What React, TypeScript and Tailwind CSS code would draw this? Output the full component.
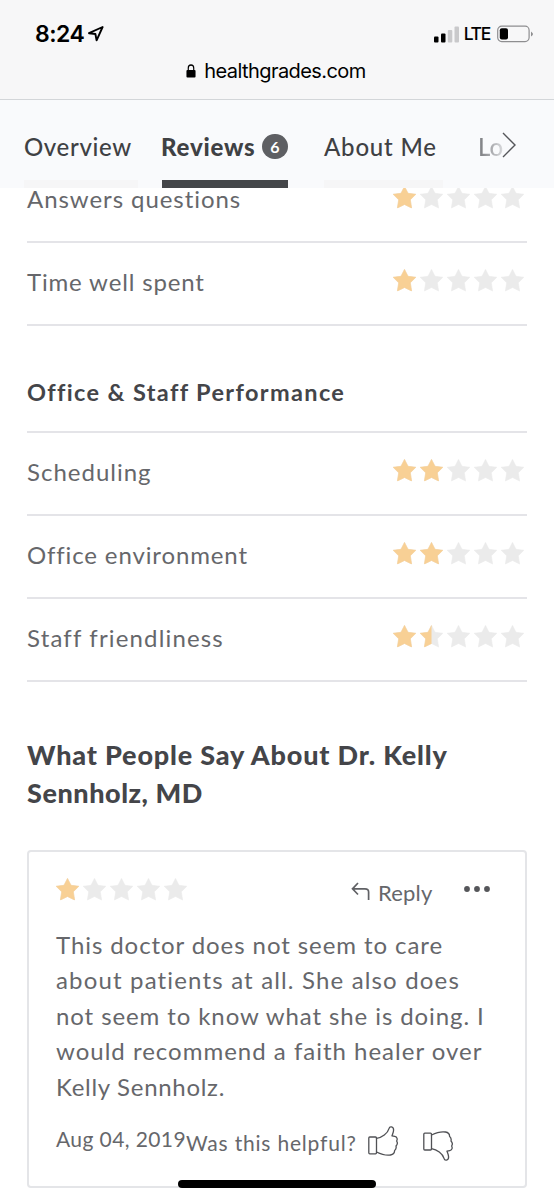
import clsx from "clsx";

const STAR = "M11.5 0.4 L15 7.3 L22.8 8.3 L17.3 13.8 L18.6 22 L11.5 18.5 L4.4 22 L5.7 13.8 L0.2 8.3 L8 7.3 Z";

function Star({ fill }: { fill: number }) {
  return (
    <svg width="23" height="23" viewBox="0 0 23 23" className="shrink-0">
      <path d={STAR} fill="#ebebeb" stroke="#ebebeb" strokeWidth="0.6" strokeLinejoin="round" />
      {fill > 0 && (
        <path
          d={STAR}
          fill="#f8d095"
          stroke="#f8d095"
          strokeWidth="0.6"
          strokeLinejoin="round"
          style={{ clipPath: `inset(0 ${(1 - fill) * 100}% 0 0)` }}
        />
      )}
    </svg>
  );
}

function Stars({ value }: { value: number }) {
  return (
    <div className="flex gap-1">
      {[0, 1, 2, 3, 4].map((i) => (
        <Star key={i} fill={Math.max(0, Math.min(1, value - i))} />
      ))}
    </div>
  );
}

function Row({ label, value, className }: { label: string; value: number; className?: string }) {
  return (
    <div className="flex h-[83px] items-center justify-between border-b-2 border-[#e4e4e8] pr-[3.5px]">
      <span className={clsx("pb-[3px] whitespace-nowrap", className)}>{label}</span>
      <div className="-mt-[6px]">
        <Stars value={value} />
      </div>
    </div>
  );
}

function Thumb({ down }: { down?: boolean }) {
  return (
    <svg
      width="30"
      height="30"
      viewBox="0 0 30 30"
      fill="none"
      stroke="#505155"
      strokeWidth="1.3"
      strokeLinejoin="round"
      strokeLinecap="round"
      className={clsx("shrink-0", down && "-scale-y-100")}
    >
      <rect x="0.8" y="11" width="7.7" height="16.8" rx="1" />
      <path d="M8.5 12.4 C14 11.5 19.6 7.5 21 2.6 C21.6 0 25.6 0.2 25.6 4 C25.6 6 24.6 8 24 9.8 L26.8 10.4 C29.4 11 29.6 13.4 28.6 15 C29.8 16.8 29.2 18.8 28 20 C28.6 22 27.8 23.4 26.6 24.6 C26.6 27 25 28.6 22.5 29 C18 29.8 13 28.2 8.5 26" />
    </svg>
  );
}

function StatusBar() {
  return (
    <div className="h-[100px] border-b border-[#d3d6d9] bg-[#f7f7f8] font-['Inter',sans-serif] text-black">
      <div className="flex h-[51px] items-start justify-between pt-[19px] pr-[21px] pl-[35px]">
        <div className="flex items-center">
          <span className="text-[23px] leading-[30px] font-semibold tracking-[-0.5px]">8:24</span>
          <svg width="16" height="16" viewBox="0 0 16 16" className="ml-1" fill="none" stroke="#000" strokeWidth="1.9" strokeLinejoin="round">
            <path d="M14.6 1 L1 7.2 L7.4 8 L8.6 14.4 Z" />
          </svg>
        </div>
        <div className="flex h-[30px] items-center">
          <svg width="25" height="17" viewBox="0 0 25 17">
            <rect x="0" y="10.5" width="4.5" height="6" rx="1" />
            <rect x="7" y="7.5" width="4.5" height="9" rx="1" />
            <rect x="13.8" y="4" width="4.5" height="12.5" rx="1" fill="#c9c9cb" />
            <rect x="20.5" y="0.5" width="4.5" height="16" rx="1" fill="#c9c9cb" />
          </svg>
          <span className="ml-[5px] text-[17.5px] font-medium tracking-[-1.3px]">LTE</span>
          <svg width="36" height="18" viewBox="0 0 36 18" className="ml-[7px]">
            <rect x="0.7" y="1.2" width="31.4" height="15.4" rx="4" fill="none" stroke="#8e8e90" strokeWidth="1.2" />
            <rect x="2.8" y="3.2" width="8.2" height="11.4" rx="2" />
            <path d="M34 6.5 Q36 8 36 9 Q36 10 34 11.5 Z" fill="#8e8e90" />
          </svg>
        </div>
      </div>
      <div className="flex h-[40px] items-center justify-center pr-[2px]">
        <svg width="10" height="14" viewBox="0 0 11 14" preserveAspectRatio="none">
          <rect x="0.5" y="6" width="10" height="7.5" rx="1" />
          <path d="M2.5 6.5 V4 A3 3 0 0 1 8.5 4 V6.5" fill="none" stroke="#000" strokeWidth="1.3" />
        </svg>
        <span className="ml-2 text-[20px] tracking-[-0.58px]">healthgrades.com</span>
      </div>
    </div>
  );
}

function Tabs() {
  return (
    <div className="flex h-[88px] bg-[#f9fafc] pl-6 text-[24px] leading-[30px] font-medium whitespace-nowrap text-[#3f4144]">
      <div className="w-[114px] border-b-8 border-[#f6f6f7] pt-8">
        <span className="tracking-[0.65px]">Overview</span>
      </div>
      <div className="ml-6 flex w-[126px] items-start border-b-8 border-[#444649] pt-8">
        <span className="-ml-px font-black tracking-[0.8px]">Reviews</span>
        <span className="mt-[2px] ml-auto flex h-[25px] w-[26px] items-center justify-center rounded-full bg-[#5e5f63] text-[16px] font-bold text-white">6</span>
      </div>
      <div className="ml-9 w-[119px] border-b-8 border-[#f6f6f7] pt-8">
        <span className="tracking-[0.8px]">About Me</span>
      </div>
      <div className="ml-[35px] flex w-[40px] pt-8">
        <span className="w-[26px] overflow-hidden bg-linear-to-r from-[#77787c] to-[#dedfe2] bg-clip-text text-transparent">Lo</span>
        <svg width="14" height="26" viewBox="0 0 14 26" className="-ml-[2px]" fill="none" stroke="#55565a" strokeWidth="1.4">
          <path d="M1 1 L13 13 L1 25" />
        </svg>
      </div>
    </div>
  );
}

const reviewLines = [
  { text: "This doctor does not seem to care", className: "tracking-[0.92px]" },
  { text: "about patients at all. She also does", className: "tracking-[1.16px]" },
  { text: "not seem to know what she is doing. I", className: "tracking-[0.9px]" },
  { text: "would recommend a faith healer over", className: "tracking-[1px]" },
  { text: "Kelly Sennholz.", className: "tracking-[0.7px]" },
];

function ReviewCard() {
  return (
    <div className="mt-[37px] h-[338px] rounded border-2 border-[#e4e5e8] pt-[26px] pr-[35px] pl-[27px]">
      <div className="flex h-[30px] items-start">
        <Stars value={1} />
        <div className="ml-[164px] flex items-center gap-2">
          <svg width="19" height="19" viewBox="0 0 19 19" fill="none" stroke="#606165" strokeWidth="1.7" className="-mt-[3px]">
            <path d="M7 1 L1.5 6.8 L7 12.5 M1.5 6.8 H14 Q17.6 6.8 17.6 10 V18" />
          </svg>
          <span className="text-[22px] leading-[30px] tracking-[0.2px]">Reply</span>
        </div>
        <svg width="26" height="6" viewBox="0 0 26 6" className="mt-2 ml-auto" fill="#55565a">
          <circle cx="3" cy="3" r="2.9" />
          <circle cx="13" cy="3" r="2.9" />
          <circle cx="23" cy="3" r="2.9" />
        </svg>
      </div>
      <p className="mt-[19px] text-[24px] leading-[35.4px] whitespace-nowrap">
        {reviewLines.map((l) => (
          <span key={l.text} className={clsx("block", l.className)}>
            {l.text}
          </span>
        ))}
      </p>
      <div className="mt-[17px] flex items-start text-[21px] leading-[30px] whitespace-nowrap">
        <span className="mt-[3px] w-[130px] tracking-[0.4px]">Aug 04, 2019</span>
        <span className="mt-[7px] w-[182px] tracking-[0.8px]">Was this helpful?</span>
        <div className="mt-[5px]">
          <Thumb />
        </div>
        <div className="mt-[10px] ml-[25px]">
          <Thumb down />
        </div>
      </div>
    </div>
  );
}

export default function App() {
  return (
    <div className="relative h-[1200px] w-[554px] overflow-hidden bg-white font-['Lato',sans-serif] text-[#66676b]">
      <div className="relative z-10">
        <StatusBar />
        <Tabs />
      </div>

      <main className="-mt-[28px] px-[27px] text-[24px]">
        <Row label="Answers questions" value={1} className="tracking-[0.94px]" />
        <Row label="Time well spent" value={1} className="tracking-[0.84px]" />
        <h3 className="flex h-[107px] items-end border-b-2 border-[#e4e4e8] pb-[21px] text-[23.5px] font-bold whitespace-nowrap text-[#444549]">
          <span className="tracking-[1.36px]">Office &amp; Staff Performance</span>
        </h3>
        <Row label="Scheduling" value={2} className="tracking-[1px]" />
        <Row label="Office environment" value={2} className="tracking-[0.87px]" />
        <Row label="Staff friendliness" value={1.5} className="tracking-[1.16px]" />

        <h2 className="mt-[54px] text-[27px] leading-[38px] font-black whitespace-nowrap text-[#444549]">
          <span className="block tracking-[0.82px]">What People Say About Dr. Kelly</span>
          <span className="block tracking-[0.55px]">Sennholz, MD</span>
        </h2>
        <div className="pt-px">
          <ReviewCard />
        </div>
      </main>

      <div className="absolute bottom-3 left-[178px] h-[8px] w-[198px] rounded-full bg-black" />
    </div>
  );
}
